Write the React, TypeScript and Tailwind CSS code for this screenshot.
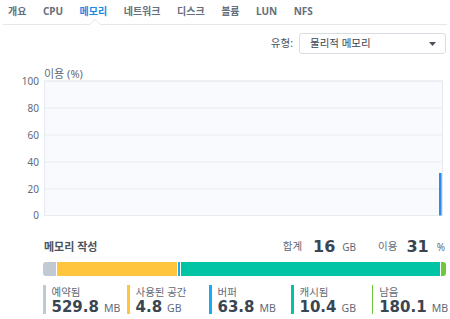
import React from "react";

const KR = { fontFamily: '"Noto Sans", "Noto Sans CJK KR", sans-serif' };
const NUM = { fontFamily: '"DejaVu Sans", "Noto Sans CJK KR", sans-serif' };

const tabs = ["개요", "CPU", "메모리", "네트워크", "디스크", "볼륨", "LUN", "NFS"];

const legend = [
  { label: "예약됨", value: "529.8", unit: "MB", color: "bg-[#c1cad3]" },
  { label: "사용된 공간", value: "4.8", unit: "GB", color: "bg-[#ffc53d]" },
  { label: "버퍼", value: "63.8", unit: "MB", color: "bg-[#14acf0]" },
  { label: "캐시됨", value: "10.4", unit: "GB", color: "bg-[#00c4a4]" },
  { label: "남음", value: "180.1", unit: "MB", color: "bg-[#6cc93a]" },
];

function Chart() {
  const ys = [
    { v: "100", y: 27 },
    { v: "80", y: 54 },
    { v: "60", y: 81 },
    { v: "40", y: 108 },
    { v: "20", y: 135 },
    { v: "0", y: 161.5 },
  ];
  return (
    <svg width="450" height="170" className="block" style={KR}>
      <text x="44" y="24" fontSize="11" fill="#5f6a78">
        이용 (%)
      </text>
      <rect x="44.5" y="27" width="398" height="134.5" fill="#f8fafd" stroke="#e6eaf0" />
      {ys.map((t) => (
        <g key={t.v}>
          <line x1="44.5" x2="442.5" y1={t.y} y2={t.y} stroke="#e8ecf1" strokeWidth="1.2" />
          <text x="39" y={t.y + 3.5} fontSize="10" fill="#5f6a78" textAnchor="end">
            {t.v}
          </text>
        </g>
      ))}
      <rect x="439" y="119" width="2.6" height="42.5" fill="#2a8cf0" />
    </svg>
  );
}

export default function App() {
  return (
    <div className="w-[450px] h-[319px] overflow-hidden bg-white" style={KR}>
      {/* Tabs */}
      <div className="relative mx-[3px] h-[25px] border-b border-[#e4e8ed] flex items-center pl-[5px] gap-[16.5px] pb-[2px]">
        {tabs.map((t) => (
          <span
            key={t}
            className={`text-[10px] font-bold leading-none ${t === "메모리" ? "text-[#1b8be6]" : "text-[#66707c]"}`}
          >
            {t}
          </span>
        ))}
        <svg className="absolute left-[86px] top-[19px]" width="12" height="7">
          <path d="M0 6 L6 0.5 L12 6" fill="#ffffff" stroke="#e4e8ed" strokeWidth="1" />
        </svg>
      </div>

      {/* Select row */}
      <div className="mt-[8px] h-[21px] flex items-center justify-end pr-[4px]">
        <span className="text-[10.5px] text-[#4d5663] mr-[6px]">유형:</span>
        <div className="w-[147px] h-[21px] border border-[#d9dee4] rounded-[3px] flex items-center justify-between pl-[10px] pr-[9px]">
          <span className="text-[10.5px] text-[#3b4450]">물리적 메모리</span>
          <svg width="7" height="4">
            <path d="M0 0 L7 0 L3.5 4 Z" fill="#4a525c" />
          </svg>
        </div>
      </div>

      <Chart />

      {/* Summary */}
      <div className="mt-[13px] h-[20px] ml-[43px] mr-[5px] flex items-center justify-between">
        <span className="text-[11px] font-bold text-[#4a5360] ml-[1px]">메모리 작성</span>
        <div className="flex items-center">
          <span className="text-[10.5px] text-[#5f6a78]">합계</span>
          <span className="ml-[11px] text-[16px] font-bold text-[#3a4552]" style={NUM}>16</span>
          <span className="ml-[7px] text-[10px] text-[#5f6a78]">GB</span>
          <span className="ml-[22px] text-[10.5px] text-[#5f6a78]">이용</span>
          <span className="ml-[9px] text-[16px] font-bold text-[#3a4552]" style={NUM}>31</span>
          <span className="ml-[8px] text-[10px] text-[#5f6a78]">%</span>
        </div>
      </div>

      {/* Bar */}
      <div className="mt-[5px] ml-[43px] w-[403px] h-[14px] flex gap-[1px] rounded-[3px] overflow-hidden">
        <div className="w-[13px] bg-[#c1cad3]" />
        <div className="w-[120px] bg-[#ffc53d]" />
        <div className="w-[2px] bg-[#14acf0]" />
        <div className="w-[259px] bg-[#00c4a4]" />
        <div className="w-[5px] bg-[#6cc93a]" />
      </div>

      {/* Legend */}
      <div className="mt-[9px] ml-[43px] grid grid-cols-[84px_82px_82px_81px_76px]">
        {legend.map((l) => (
          <div key={l.label} className="flex h-[29px]">
            <div className={`w-[2.5px] h-full ${l.color}`} />
            <div className="ml-[6px] flex flex-col">
              <span className="text-[10.5px] leading-[12px] text-[#5f6a78] mt-[1px]">{l.label}</span>
              <div className="mt-[2px] flex items-baseline leading-[15px]">
                <span className="text-[15px] font-bold text-[#3a4552]" style={NUM}>{l.value}</span>
                <span className="ml-[5px] text-[10.5px] text-[#5f6a78]">{l.unit}</span>
              </div>
            </div>
          </div>
        ))}
      </div>
    </div>
  );
}
